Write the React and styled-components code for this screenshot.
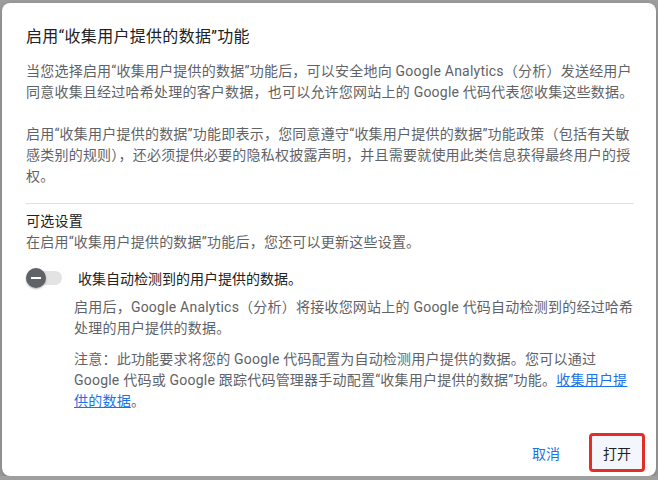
import styled, { createGlobalStyle } from 'styled-components'

const GlobalStyle = createGlobalStyle`
    html, body {
        margin: 0;
        padding: 0;
        background: #9f9f9f;
    }
    body {
        font-family: Roboto, "Noto Sans CJK SC", sans-serif;
        -webkit-font-smoothing: antialiased;
    }
`

export default function App() {
    return (
        <>
            <GlobalStyle />
            <Dialog>
                <Title>启用“收集用户提供的数据”功能</Title>
                <Paragraph>
                    当您选择启用“收集用户提供的数据”功能后，可以安全地向 Google Analytics（分析）发送经用户同意收集且经过哈希处理的客户数据，也可以允许您网站上的 Google 代码代表您收集这些数据。
                </Paragraph>
                <Paragraph $gap={21}>
                    启用“收集用户提供的数据”功能即表示，您同意遵守“收集用户提供的数据”功能政策（包括有关敏感类别的规则），还必须提供必要的隐私权披露声明，并且需要就使用此类信息获得最终用户的授权。
                </Paragraph>
                <Divider />
                <SectionTitle>可选设置</SectionTitle>
                <Paragraph $gap={0}>在启用“收集用户提供的数据”功能后，您还可以更新这些设置。</Paragraph>

                <ToggleRow>
                    <Toggle>
                        <Thumb />
                    </Toggle>
                    <ToggleLabel>收集自动检测到的用户提供的数据。</ToggleLabel>
                </ToggleRow>
                <Details>
                    <Paragraph $gap={0}>
                        启用后，Google Analytics（分析）将接收您网站上的 Google 代码自动检测到的经过哈希处理的用户提供的数据。
                    </Paragraph>
                    <Paragraph $gap={10}>
                        注意：此功能要求将您的 Google 代码配置为自动检测用户提供的数据。您可以通过 Google 代码或 Google 跟踪代码管理器手动配置“收集用户提供的数据”功能。<Link href="#">收集用户提供的数据</Link>。
                    </Paragraph>
                </Details>

                <Footer>
                    <TextButton>取消</TextButton>
                    <OpenButton>打开</OpenButton>
                </Footer>
            </Dialog>
        </>
    )
}

const Dialog = styled.div`
    box-sizing: border-box;
    margin: 3px 0 0 2px;
    width: 654px;
    height: 473px;
    background: #fff;
    border-radius: 8px;
    box-shadow: 0 2px 6px rgba(0, 0, 0, 0.25);
    padding: 22px 22px 4px 24px;
    display: flex;
    flex-direction: column;
`

const Title = styled.div`
    font-size: 16px;
    line-height: 24px;
    letter-spacing: 0.3px;
    color: #202124;
    margin-bottom: 12px;
`

const Paragraph = styled.p`
    margin: ${({ $gap }) => $gap || 0}px 0 0;
    font-size: 14px;
    line-height: 21px;
    letter-spacing: 0.22px;
    color: #5f6368;
`

const Divider = styled.hr`
    border: none;
    border-top: 1px solid #e0e0e0;
    margin: 16px 0 0;
`

const SectionTitle = styled.div`
    margin-top: 7px;
    font-size: 14px;
    line-height: 21px;
    letter-spacing: 0.22px;
    color: #202124;
`

const ToggleRow = styled.div`
    display: flex;
    align-items: center;
    height: 24px;
    margin-top: 13px;
`

const Toggle = styled.div`
    position: relative;
    width: 36px;
    height: 14px;
    border-radius: 7px;
    background: #e3e3e3;
    flex-shrink: 0;
`

const Thumb = styled.div`
    position: absolute;
    left: 0;
    top: -3px;
    width: 20px;
    height: 20px;
    border-radius: 50%;
    background: #5f6368;
    box-shadow: 0 1px 2px rgba(0, 0, 0, 0.3);

    &::after {
        content: '';
        position: absolute;
        left: 5px;
        top: 9px;
        width: 10px;
        height: 2px;
        background: #fff;
    }
`

const ToggleLabel = styled.div`
    margin-left: 16px;
    font-size: 14px;
    color: #202124;
`

const Details = styled.div`
    margin: 7px 0 0 48px;
`

const Link = styled.a`
    color: #1a73e8;
    text-decoration: underline;
`

const Footer = styled.div`
    margin-top: auto;
    margin-right: -11px;
    display: flex;
    justify-content: flex-end;
    align-items: center;
    gap: 13px;
`

const TextButton = styled.button`
    font: inherit;
    font-size: 14px;
    color: #1a73e8;
    background: none;
    border: none;
    padding: 0 16px;
    height: 36px;
    cursor: pointer;
`

const OpenButton = styled.button`
    font: inherit;
    font-size: 14px;
    color: #202124;
    background: #f3f7fd;
    border: 3px solid #e52d27;
    border-radius: 4px;
    padding: 0 11px;
    height: 39px;
    cursor: pointer;
`
